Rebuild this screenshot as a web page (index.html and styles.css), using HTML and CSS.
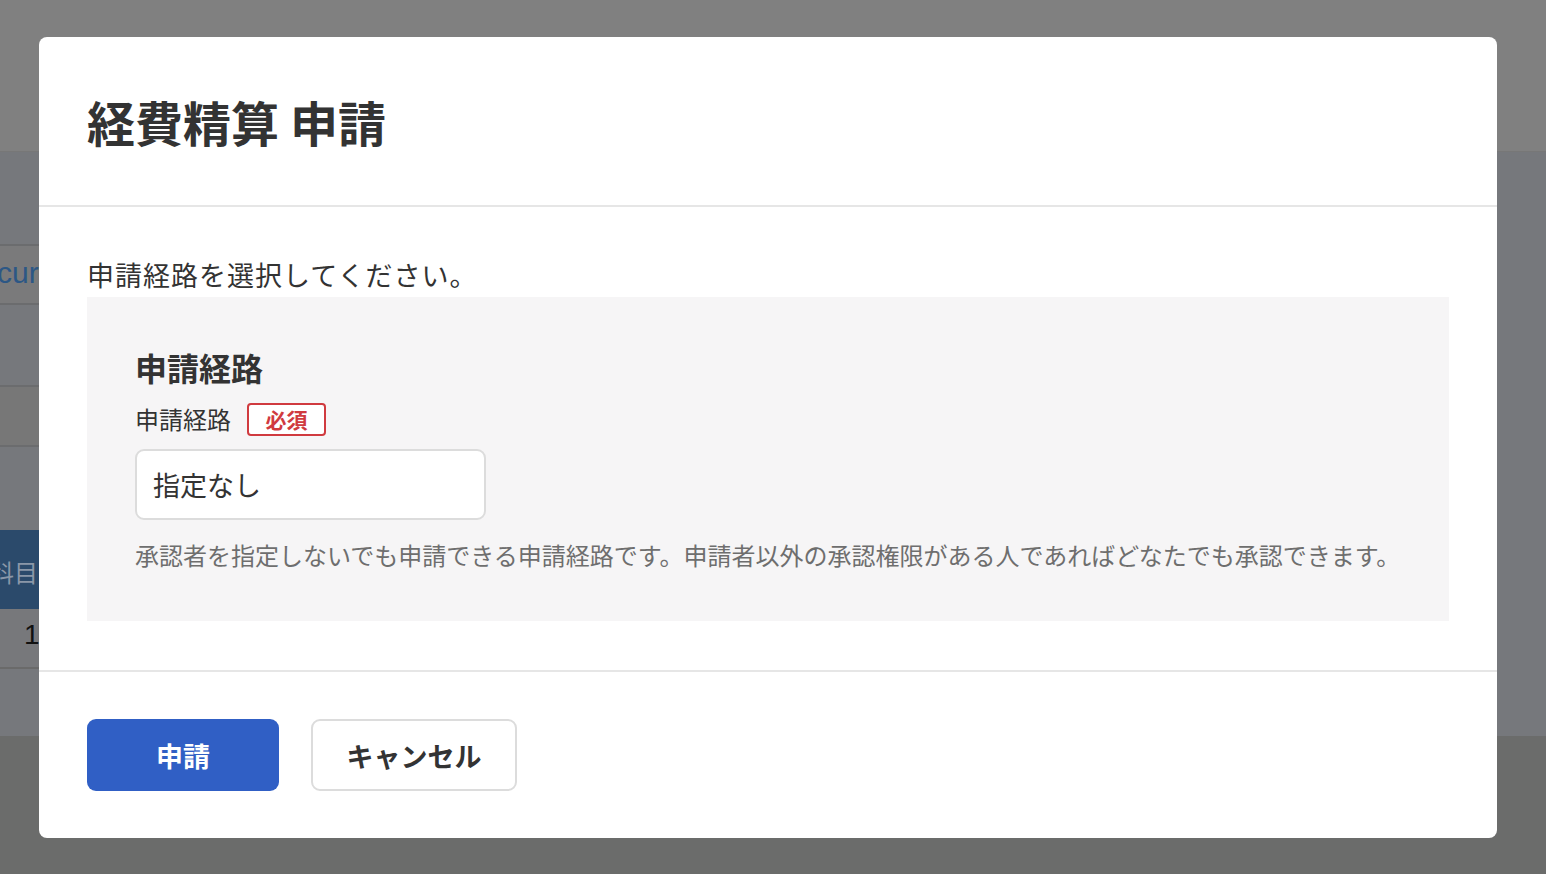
FILE: index.html
```html
<!DOCTYPE html>
<html lang="ja">
<head>
<meta charset="utf-8">
<title>経費精算 申請</title>
<link rel="stylesheet" href="styles.css">
</head>
<body>
<div class="page">
  <div class="topbar"></div>
  <div class="main">
    <div class="strip">
      <div class="gap g1"></div>
      <div class="row r-cur"><span class="cur">cur</span></div>
      <div class="gap g2"></div>
      <div class="row r-gray"></div>
      <div class="gap g3"></div>
      <div class="row r-head"><span class="headtext">科目</span></div>
      <div class="row r-one"><span class="one">1</span></div>
    </div>
  </div>
  <div class="bottombar"></div>
</div>

<div class="modal">
  <div class="modal-header">
    <h1 class="title">経費精算 申請</h1>
  </div>
  <div class="modal-body">
    <p class="lead">申請経路を選択してください。</p>
    <div class="panel">
      <h2 class="panel-title">申請経路</h2>
      <div class="label-row">
        <span class="label">申請経路</span>
        <span class="badge">必須</span>
      </div>
      <div class="select">指定なし</div>
      <p class="desc">承認者を指定しないでも申請できる申請経路です。申請者以外の承認権限がある人であればどなたでも承認できます。</p>
    </div>
  </div>
  <div class="modal-footer">
    <button class="btn btn-primary">申請</button>
    <button class="btn btn-secondary">キャンセル</button>
  </div>
</div>
</body>
</html>
```

FILE: styles.css
```css
* { box-sizing: border-box; }
html, body {
  margin: 0;
  padding: 0;
  width: 1546px;
  height: 874px;
  overflow: hidden;
}
body {
  font-family: "Noto Sans CJK JP", "Noto Sans", sans-serif;
  background: #6b6c6b;
  color: #333;
}
.page {
  display: flex;
  flex-direction: column;
  height: 874px;
}
.topbar {
  height: 152px;
  background: #808080;
  border-bottom: 1px solid #777;
}
.main {
  height: 584px;
  background: #76787c;
}
.bottombar {
  flex: 1;
  background: #6b6c6b;
}
.strip {
  width: 60px;
  display: flex;
  flex-direction: column;
}
.g1 { height: 92px; }
.g2 { height: 82px; }
.g3 { height: 83px; }
.row {
  border-top: 2px solid #6b6c6e;
  position: relative;
  overflow: hidden;
}
.r-cur {
  height: 61px;
  background: #7a7a7b;
  border-bottom: 2px solid #6b6c6e;
}
.cur {
  position: absolute;
  left: -3px;
  top: 10px;
  font-family: "Liberation Sans", sans-serif;
  font-size: 30px;
  color: #2c5785;
}
.r-gray {
  height: 62px;
  background: #777777;
  border-bottom: 2px solid #6b6c6e;
  margin-top: -2px;
}
.r-head {
  height: 79px;
  border-top: none;
  background: #2b4a6b;
}
.headtext {
  position: absolute;
  left: -10px;
  top: 24px;
  font-size: 24px;
  color: #8a97a8;
}
.r-one {
  height: 60px;
  border-top: none;
  background: #77787b;
  border-bottom: 2px solid #6a6a6a;
}
.one {
  position: absolute;
  left: 24px;
  top: 10px;
  font-family: "Liberation Sans", sans-serif;
  font-size: 28px;
  color: #111;
}

.modal {
  position: absolute;
  left: 39px;
  top: 37px;
  width: 1458px;
  height: 801px;
  background: #fff;
  border-radius: 8px;
  display: flex;
  flex-direction: column;
}
.modal-header {
  padding: 48px 48px;
  border-bottom: 2px solid #e6e6e6;
}
.title {
  margin: 0;
  font-size: 48px;
  line-height: 72px;
  font-weight: 700;
  color: #333;
}
.modal-body {
  padding: 48px 48px 49px;
  border-bottom: 2px solid #e6e6e6;
}
.lead {
  margin: 0 0 2px;
  font-size: 27px;
  line-height: 40px;
  letter-spacing: 1px;
  color: #333;
}
.panel {
  background: #f6f5f6;
  padding: 46px 48px 48px;
  display: flex;
  flex-direction: column;
}
.panel-title {
  margin: 0;
  font-size: 32px;
  line-height: 48px;
  font-weight: 700;
  color: #333;
}
.label-row {
  display: flex;
  align-items: center;
  gap: 16px;
  margin-top: 10px;
  height: 36px;
}
.label {
  font-size: 24px;
  line-height: 36px;
  color: #333;
}
.badge {
  display: inline-flex;
  align-items: center;
  justify-content: center;
  width: 79px;
  height: 33px;
  border: 2px solid #d03a3f;
  border-radius: 4px;
  background: #fff;
  color: #d03a3f;
  font-size: 21px;
  font-weight: 700;
}
.select {
  margin-top: 12px;
  width: 351px;
  height: 71px;
  background: #fff;
  border: 2px solid #dcdcdc;
  border-radius: 9px;
  padding: 0 16px;
  display: flex;
  align-items: center;
  font-size: 27px;
  color: #333;
}
.desc {
  margin: 17px 0 0;
  font-size: 24px;
  line-height: 36px;
  color: #6e6e6e;
}
.modal-footer {
  padding: 47px 48px 48px;
  display: flex;
  gap: 32px;
}
.btn {
  font-family: "Noto Sans CJK JP", "Noto Sans", sans-serif;
  font-size: 27px;
  font-weight: 700;
  height: 72px;
  border-radius: 9px;
  cursor: pointer;
}
.btn-primary {
  width: 192px;
  background: #305fc5;
  color: #fff;
  border: none;
}
.btn-secondary {
  width: 206px;
  background: #fff;
  color: #333;
  border: 2px solid #dcdcdc;
}
```
